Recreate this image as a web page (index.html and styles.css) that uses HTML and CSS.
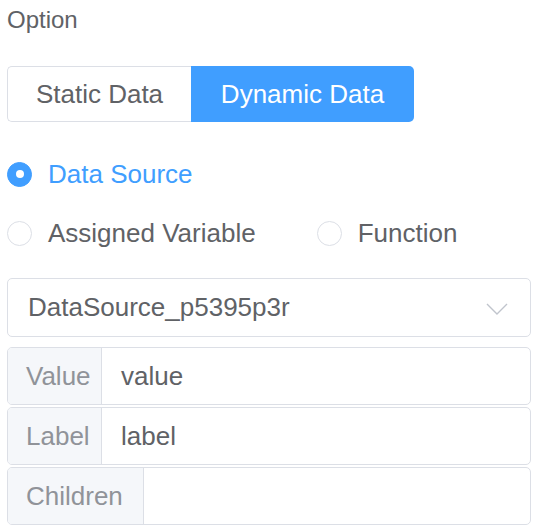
FILE: index.html
```html
<!DOCTYPE html>
<html>
<head>
<meta charset="utf-8">
<link rel="stylesheet" href="styles.css">
</head>
<body>
<div class="panel">
  <div class="title">Option</div>
  <div class="btn-group">
    <div class="seg seg-static">Static Data</div>
    <div class="seg seg-active">Dynamic Data</div>
  </div>
  <div class="radio-row first">
    <label class="radio checked"><span class="circle"></span><span class="rlabel">Data Source</span></label>
  </div>
  <div class="radio-row second">
    <label class="radio"><span class="circle"></span><span class="rlabel">Assigned Variable</span></label>
    <label class="radio fn"><span class="circle"></span><span class="rlabel">Function</span></label>
  </div>
  <div class="select">
    <span class="select-text">DataSource_p5395p3r</span>
    <svg class="chev" width="22" height="12" viewBox="0 0 22 12"><path d="M1 1 L11 11 L21 1" fill="none" stroke="#c0c4cc" stroke-width="1.4"/></svg>
  </div>
  <div class="rows">
    <div class="igroup">
      <div class="prepend narrow">Value</div>
      <div class="ivalue">value</div>
    </div>
    <div class="igroup">
      <div class="prepend narrow">Label</div>
      <div class="ivalue">label</div>
    </div>
    <div class="igroup">
      <div class="prepend">Children</div>
      <div class="ivalue"></div>
    </div>
  </div>
</div>
</body>
</html>
```
FILE: styles.css
```css
html, body {
  margin: 0;
  padding: 0;
  background: #ffffff;
}
body {
  font-family: "Liberation Sans", Arial, sans-serif;
  color: #606266;
}
.panel {
  width: 524px;
  padding: 8px 0 0 7px;
}
.title {
  font-size: 24px;
  line-height: 24px;
  color: #606266;
}
.btn-group {
  display: flex;
  margin-top: 34px;
  height: 56px;
}
.seg {
  display: flex;
  align-items: center;
  justify-content: center;
  font-size: 26px;
  white-space: nowrap;
  box-sizing: border-box;
}
.seg-static {
  width: 184px;
  border: 1px solid #dcdfe6;
  border-right: none;
  border-radius: 5px 0 0 5px;
  color: #606266;
  background: #fff;
}
.seg-active {
  width: 223px;
  background: #409eff;
  color: #ffffff;
  border-radius: 0 5px 5px 0;
}
.radio-row {
  display: flex;
  align-items: center;
  height: 30px;
}
.radio-row.first {
  margin-top: 37px;
}
.radio-row.second {
  margin-top: 29px;
}
.radio {
  display: flex;
  align-items: center;
  font-size: 26px;
  color: #606266;
}
.radio.fn {
  margin-left: 61px;
}
.circle {
  width: 25px;
  height: 25px;
  box-sizing: border-box;
  border-radius: 50%;
  border: 1px solid #dcdfe6;
  background: #fff;
  margin-right: 16px;
  position: relative;
}
.radio.checked .circle {
  background: #409eff;
  border-color: #409eff;
}
.radio.checked .circle::after {
  content: "";
  position: absolute;
  width: 8px;
  height: 8px;
  border-radius: 50%;
  background: #fff;
  left: 50%;
  top: 50%;
  transform: translate(-50%, -50%);
}
.radio.checked .rlabel {
  color: #409eff;
}
.select {
  margin-top: 30px;
  height: 59px;
  box-sizing: border-box;
  border: 1px solid #dcdfe6;
  border-radius: 5px;
  display: flex;
  align-items: center;
  justify-content: space-between;
  padding: 0 22px 0 20px;
  font-size: 26px;
  color: #606266;
}
.chev {
  display: block;
  margin-top: 2px;
}
.rows {
  margin-top: 10px;
  display: flex;
  flex-direction: column;
  gap: 2px;
}
.igroup {
  display: flex;
  height: 58px;
  box-sizing: border-box;
  border: 1px solid #dcdfe6;
  border-radius: 5px;
  overflow: hidden;
  font-size: 26px;
}
.prepend {
  box-sizing: border-box;
  background: #f5f7fa;
  color: #909399;
  border-right: 1px solid #dcdfe6;
  padding: 0 20px 0 18px;
  display: flex;
  align-items: center;
  white-space: nowrap;
}
.prepend.narrow {
  width: 94px;
  flex: 0 0 94px;
  padding-right: 0;
}
.ivalue {
  flex: 1;
  display: flex;
  align-items: center;
  padding-left: 19px;
  color: #606266;
}
```
